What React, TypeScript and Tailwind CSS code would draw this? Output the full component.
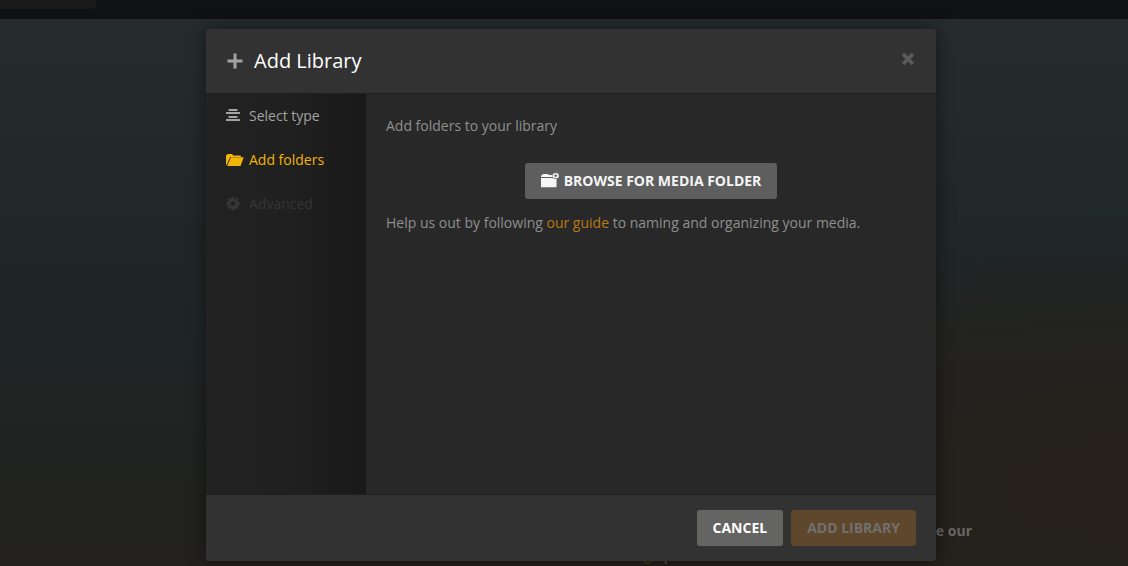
import React from 'react';

function PlusIcon() {
  return (
    <svg width="16" height="16" viewBox="0 0 16 16" fill="#a3a3a3" aria-hidden="true">
      <path d="M6.5 0.5h3v6h6v3h-6v6h-3v-6h-6v-3h6z" />
    </svg>
  );
}

function CloseIcon() {
  return (
    <svg width="14" height="14" viewBox="0 0 14 14" fill="none" stroke="currentColor" strokeWidth="3.8" aria-hidden="true">
      <path d="M2 2l10 10M12 2L2 12" />
    </svg>
  );
}

function ListIcon() {
  return (
    <svg width="18" height="14" viewBox="0 0 18 14" fill="currentColor" aria-hidden="true">
      <path d="M2.500 0h9v2h-9zM0 3h14v2H0zM2.500 7h9v2h-9zM0 10h14v2H0z" />
    </svg>
  );
}

function FolderOpenIcon() {
  return (
    <svg width="18" height="14" viewBox="0 0 18 14" fill="currentColor" aria-hidden="true">
      <path d="M0 12V2.4L1.6 1H6l1.2 1.5h7.3L15.2 4H4.3L0.6 12z" />
      <path d="M4.9 4.3H17.7L14.6 13H1.2z" />
    </svg>
  );
}

function GearIcon() {
  return (
    <svg width="18" height="14" viewBox="0 0 18 14" fill="none" stroke="currentColor" aria-hidden="true">
      <circle cx="7" cy="6.5" r="3.8" strokeWidth="3" />
      <path
        d="M7 -0.5v2.5M7 11V13.5M0 6.5h2.5M11.5 6.5H14M2.05 1.55l1.8 1.8M10.15 9.65l1.8 1.8M2.05 11.45l1.8-1.8M10.15 3.35l1.8-1.8"
        strokeWidth="2.8"
      />
    </svg>
  );
}

function FolderAddIcon() {
  return (
    <svg width="18" height="16" viewBox="0 0 18 16" fill="currentColor" aria-hidden="true">
      <path d="M0 4V2.800l1-.8L2 1h5l1 1h3l.6 2z" />
      <path d="M0 5h11.800l1.500 1H15.500v8.200H0z" />
      <path fillRule="evenodd" d="M14.700 0a3.200 2.700 0 1 1 0 5.400a3.200 2.700 0 1 1 0-5.400zM14.200 1.200v1h-1.100v1h1.100v1h1v-1h1.100v-1h-1.100v-1z" />
    </svg>
  );
}

const steps = [
  { label: 'Select type', icon: <ListIcon />, color: 'text-[#a3a3a3]' },
  { label: 'Add folders', icon: <FolderOpenIcon />, color: 'text-[#f2b407]' },
  { label: 'Advanced', icon: <GearIcon />, color: 'text-[#363636]', disabled: true },
];

export default function App() {
  return (
    <div className="relative flex min-h-screen flex-col overflow-hidden bg-[#212525] bg-[radial-gradient(ellipse_at_100%_85%,#27211b_0%,#27211b00_40%),linear-gradient(to_bottom,#262d2c_0%,#1f2627_50%,#22211e_100%)] font-['Open_Sans',sans-serif] text-sm">
      <div className="h-[19px] bg-[#101113]">
        <div className="h-[9px] w-24 rounded-br bg-[#191919]" />
      </div>
      <div className="flex grow flex-col justify-end font-bold leading-5 text-[#696866]">
        <p className="self-end pr-[156px]">e our</p>
        <p className="flex h-[25px] items-end gap-3 self-center pl-[188px] text-[#494844]">
          <span className="text-[#41351f]">g</span>
          <span>p</span>
        </p>
      </div>

      <div className="absolute inset-0 flex items-start justify-center pl-3.5 pt-[29px]">
        <section
          role="dialog"
          aria-labelledby="dialog-title"
          className="flex w-full max-w-[730px] flex-col overflow-hidden rounded-[3px] bg-[#282828] shadow-[0_0_18px_rgba(0,0,0,0.5)]"
        >
          <header className="flex items-center justify-between border-b border-[#1f1f1f] bg-[#323232] px-5 py-4">
            <h1 id="dialog-title" className="flex items-center gap-[11px] pl-px text-xl leading-8 text-white">
              <PlusIcon />
              Add Library
            </h1>
            <button type="button" aria-label="Close" className="mr-px mb-1 text-[#595b5b]">
              <CloseIcon />
            </button>
          </header>

          <div className="flex min-h-[400px]">
            <nav className="w-40 shrink-0 bg-linear-to-r from-[#222222] via-[#1f201f] to-[#191919]">
              {steps.map((step) => (
                <button
                  key={step.label}
                  type="button"
                  disabled={step.disabled}
                  className={`flex h-11 w-full items-center gap-[5px] px-5 leading-5 ${step.color}`}
                >
                  {step.icon}
                  {step.label}
                </button>
              ))}
            </nav>

            <div className="flex grow flex-col p-5 leading-6 text-[#8f8f8f]">
              <p>Add folders to your library</p>
              <button
                type="button"
                className="mt-[25px] mb-3 flex h-9 items-center gap-[5px] self-center rounded-[3px] bg-[#5e5e5e] px-4 font-bold text-[#f5f5f5]"
              >
                <FolderAddIcon />
                BROWSE FOR MEDIA FOLDER
              </button>
              <p>
                Help us out by following{' '}
                <a href="#guide" className="text-[#b87a10]">
                  our guide
                </a>{' '}
                to naming and organizing your media.
              </p>
            </div>
          </div>

          <footer className="flex justify-end gap-2 border-t border-[#1f1f1f] bg-[#323232] px-5 py-[15px] font-bold">
            <button type="button" className="h-9 rounded-[3px] bg-[#646462] px-4 text-white">
              CANCEL
            </button>
            <button type="button" disabled className="h-9 rounded-[3px] bg-[#5e472a] px-4 text-[#707070]">
              ADD LIBRARY
            </button>
          </footer>
        </section>
      </div>
    </div>
  );
}
